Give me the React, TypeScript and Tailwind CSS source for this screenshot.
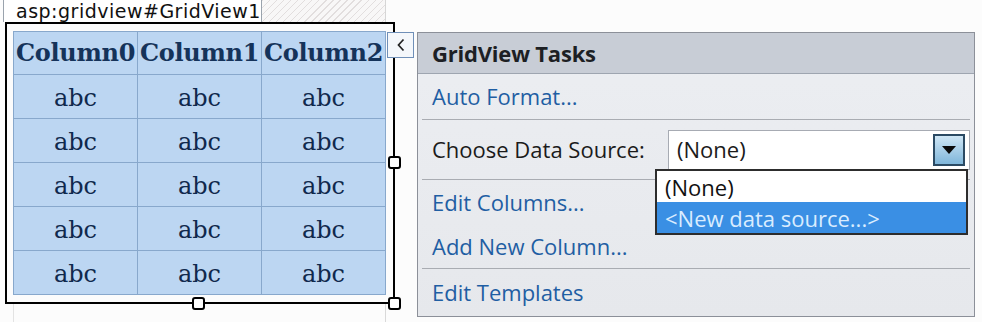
import React from "react";

const rows = [0, 1, 2, 3, 4];
const cols = ["Column0", "Column1", "Column2"];

function Handle({ className }: { className: string }) {
  return (
    <div
      className={`absolute h-[13px] w-[13px] rounded-[3px] border-2 border-black bg-white ${className}`}
    />
  );
}

function Separator() {
  return <div className="mx-[4px] h-px shrink-0 bg-[#a9acb2]" />;
}

export default function App() {
  const ui = { fontFamily: '"Open Sans", "Noto Sans", Arial, sans-serif' };
  const serif = { fontFamily: '"DejaVu Serif", "Liberation Serif", serif' };
  const tag = { fontFamily: '"DejaVu Sans", "Liberation Sans", sans-serif' };

  return (
    <div className="relative flex h-[322px] w-[982px] overflow-hidden bg-[#fcfcfc]" style={ui}>
      {/* design surface */}
      <div className="flex w-[400px] shrink-0 flex-col pl-[3px]">
        <div className="flex h-[22px] shrink-0">
          <div
            className="w-[259px] whitespace-nowrap border-x border-[#9aa3ad] bg-white pl-[12px] text-[19px] leading-[22px] tracking-[0.5px] text-[#111]"
            style={tag}
          >
            asp:gridview#GridView1
          </div>
          <div className="w-[124px] border-r border-[#d6d6d6] bg-[repeating-linear-gradient(135deg,#e2dede_0px,#e2dede_1px,#f8f7f7_1px,#f8f7f7_5px)]" />
        </div>

        <div className="relative ml-[2px] h-[282px] w-[390px] shrink-0 border-2 border-black pl-[6px] pt-[7px]">
          <table className="border-collapse bg-[#bcd6f2] text-[#10294d]" style={serif}>
            <thead>
              <tr>
                {cols.map((c) => (
                  <th
                    key={c}
                    className="h-[43px] w-[124px] border border-[#88a8cc] p-0 text-center text-[24px] font-bold leading-none tracking-[-0.3px] text-[#15335a]"
                  >
                    {c}
                  </th>
                ))}
              </tr>
            </thead>
            <tbody>
              {rows.map((r) => (
                <tr key={r}>
                  {cols.map((c) => (
                    <td
                      key={c}
                      className="h-[44px] w-[124px] border border-[#88a8cc] p-0 pt-[2px] text-center text-[24px] leading-none"
                    >
                      abc
                    </td>
                  ))}
                </tr>
              ))}
            </tbody>
          </table>
          <Handle className="right-[-8px] top-[132px]" />
          <Handle className="bottom-[-8px] left-[185px]" />
          <Handle className="bottom-[-8px] right-[-8px]" />
        </div>
        <div className="ml-[10px] flex h-full w-[373px] justify-between">
          <div className="w-px bg-[#e3e3e3]" />
          <div className="w-px bg-[#d9d9d9]" />
        </div>
      </div>

      {/* smart tag glyph */}
      <div className="absolute left-[387px] top-[32px] flex h-[26px] w-[27px] items-center justify-center border border-[#6f8fb8] bg-[#f4f7fb]">
        <svg width="12" height="16" viewBox="0 0 12 16">
          <path d="M8.5 2.5 L3.5 8 L8.5 13.5" fill="none" stroke="#222" strokeWidth="1.7" />
        </svg>
      </div>

      {/* tasks panel */}
      <div className="ml-[17px] mt-[32px] flex h-[285px] w-[558px] flex-col border border-[#8c9099] bg-[linear-gradient(180deg,#eceef2,#e6e8ec)] text-[22px]">
        <div className="flex h-[41px] shrink-0 items-center border-b border-[#9ea5b0] bg-[#c8cdd6] pl-[14px] text-[22px] font-bold tracking-[-0.2px] text-[#1d1f24]">
          GridView Tasks
        </div>
        <div className="flex h-[45px] shrink-0 items-center pl-[14px] text-[#1f5ea3]">
          Auto Format...
        </div>
        <Separator />
        <div className="relative flex h-[59px] shrink-0 items-center pl-[14px] text-[#1b1b1b]">
          <span className="w-[236px] whitespace-nowrap">Choose Data Source:</span>
          <div className="flex h-[40px] w-[302px] items-center justify-between border border-[#a7abb3] bg-white pl-[8px] pr-[4px]">
            <span>(None)</span>
            <div className="flex h-[32px] w-[32px] items-center justify-center border-2 border-[#2b4a63] bg-[linear-gradient(180deg,#cfe6f5,#7fb6da)]">
              <svg width="14" height="8" viewBox="0 0 14 8">
                <path d="M0 0 H14 L7 8 Z" fill="#0a0a0a" />
              </svg>
            </div>
          </div>
        </div>
        <Separator />
        <div className="flex h-[44px] shrink-0 items-center pl-[14px] text-[#1f5ea3]">
          Edit Columns...
        </div>
        <div className="flex h-[44px] shrink-0 items-center pl-[14px] text-[#1f5ea3]">
          Add New Column...
        </div>
        <Separator />
        <div className="flex h-[47px] shrink-0 items-center pl-[14px] text-[#1f5ea3]">
          Edit Templates
        </div>
      </div>

      {/* open dropdown list */}
      <div className="absolute left-[655px] top-[169px] flex w-[313px] flex-col border-2 border-[#2d2d2d] bg-white text-[22px] leading-none">
        <div className="flex h-[31px] items-center pl-[8px] text-[#111]">(None)</div>
        <div className="flex h-[31px] items-center bg-[#3a8fe4] pl-[8px] text-[#d9ecff]">
          &lt;New data source...&gt;
        </div>
      </div>
    </div>
  );
}
